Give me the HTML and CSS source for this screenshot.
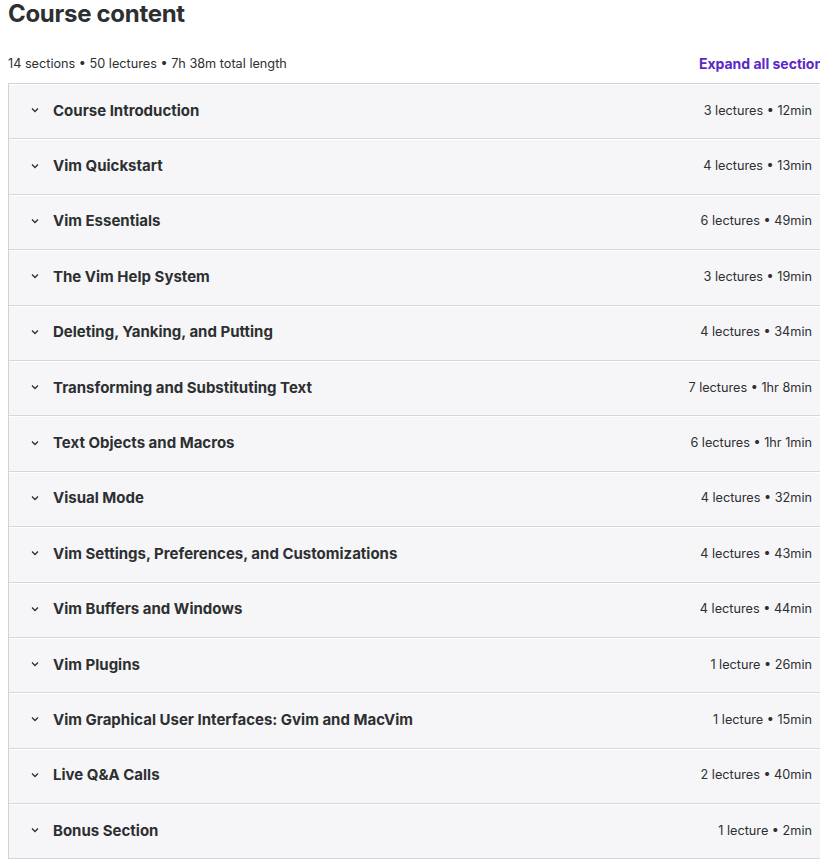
FILE: index.html
```html
<!DOCTYPE html>
<html lang="en">
<head>
    <meta charset="UTF-8">
    <meta name="viewport" content="width=device-width, initial-scale=1.0">
    <title>Course content</title>
    <link rel="stylesheet" href="styles.css">
</head>
<body>
    <main class="curriculum">
        <h2 class="curriculum-title">Course content</h2>

        <div class="curriculum-header">
            <span class="curriculum-stats">14 sections &bull; 50 lectures &bull; 7h 38m total length</span>
            <button class="expand-all">Expand all sections</button>
        </div>

        <div class="section-list">
            <div class="section-row">
                <span class="chevron"><svg viewBox="0 0 12 12"><path d="M3 4.5 6 7.5 9 4.5"/></svg></span>
                <span class="section-name">Course Introduction</span>
                <span class="section-meta">3 lectures &bull; 12min</span>
            </div>
            <div class="section-row">
                <span class="chevron"><svg viewBox="0 0 12 12"><path d="M3 4.5 6 7.5 9 4.5"/></svg></span>
                <span class="section-name">Vim Quickstart</span>
                <span class="section-meta">4 lectures &bull; 13min</span>
            </div>
            <div class="section-row">
                <span class="chevron"><svg viewBox="0 0 12 12"><path d="M3 4.5 6 7.5 9 4.5"/></svg></span>
                <span class="section-name">Vim Essentials</span>
                <span class="section-meta">6 lectures &bull; 49min</span>
            </div>
            <div class="section-row">
                <span class="chevron"><svg viewBox="0 0 12 12"><path d="M3 4.5 6 7.5 9 4.5"/></svg></span>
                <span class="section-name">The Vim Help System</span>
                <span class="section-meta">3 lectures &bull; 19min</span>
            </div>
            <div class="section-row">
                <span class="chevron"><svg viewBox="0 0 12 12"><path d="M3 4.5 6 7.5 9 4.5"/></svg></span>
                <span class="section-name">Deleting, Yanking, and Putting</span>
                <span class="section-meta">4 lectures &bull; 34min</span>
            </div>
            <div class="section-row">
                <span class="chevron"><svg viewBox="0 0 12 12"><path d="M3 4.5 6 7.5 9 4.5"/></svg></span>
                <span class="section-name">Transforming and Substituting Text</span>
                <span class="section-meta">7 lectures &bull; 1hr 8min</span>
            </div>
            <div class="section-row">
                <span class="chevron"><svg viewBox="0 0 12 12"><path d="M3 4.5 6 7.5 9 4.5"/></svg></span>
                <span class="section-name">Text Objects and Macros</span>
                <span class="section-meta">6 lectures &bull; 1hr 1min</span>
            </div>
            <div class="section-row">
                <span class="chevron"><svg viewBox="0 0 12 12"><path d="M3 4.5 6 7.5 9 4.5"/></svg></span>
                <span class="section-name">Visual Mode</span>
                <span class="section-meta">4 lectures &bull; 32min</span>
            </div>
            <div class="section-row">
                <span class="chevron"><svg viewBox="0 0 12 12"><path d="M3 4.5 6 7.5 9 4.5"/></svg></span>
                <span class="section-name">Vim Settings, Preferences, and Customizations</span>
                <span class="section-meta">4 lectures &bull; 43min</span>
            </div>
            <div class="section-row">
                <span class="chevron"><svg viewBox="0 0 12 12"><path d="M3 4.5 6 7.5 9 4.5"/></svg></span>
                <span class="section-name">Vim Buffers and Windows</span>
                <span class="section-meta">4 lectures &bull; 44min</span>
            </div>
            <div class="section-row">
                <span class="chevron"><svg viewBox="0 0 12 12"><path d="M3 4.5 6 7.5 9 4.5"/></svg></span>
                <span class="section-name">Vim Plugins</span>
                <span class="section-meta">1 lecture &bull; 26min</span>
            </div>
            <div class="section-row">
                <span class="chevron"><svg viewBox="0 0 12 12"><path d="M3 4.5 6 7.5 9 4.5"/></svg></span>
                <span class="section-name">Vim Graphical User Interfaces: Gvim and MacVim</span>
                <span class="section-meta">1 lecture &bull; 15min</span>
            </div>
            <div class="section-row">
                <span class="chevron"><svg viewBox="0 0 12 12"><path d="M3 4.5 6 7.5 9 4.5"/></svg></span>
                <span class="section-name">Live Q&amp;A Calls</span>
                <span class="section-meta">2 lectures &bull; 40min</span>
            </div>
            <div class="section-row">
                <span class="chevron"><svg viewBox="0 0 12 12"><path d="M3 4.5 6 7.5 9 4.5"/></svg></span>
                <span class="section-name">Bonus Section</span>
                <span class="section-meta">1 lecture &bull; 2min</span>
            </div>
        </div>
    </main>
</body>
</html>
```

FILE: styles.css
```css
body {
    font-family: 'Inter', 'Liberation Sans', sans-serif;
    background-color: #ffffff;
    color: #2d2f31;
    margin: 0;
    padding: 0 0 0 8px;
    overflow: hidden;
}

.curriculum {
    width: 828px;
}

.curriculum-title {
    font-size: 24px;
    font-weight: 700;
    letter-spacing: -0.3px;
    margin: 0;
    line-height: 28px;
    height: 46px;
}

.curriculum-header {
    display: flex;
    justify-content: space-between;
    align-items: center;
    height: 34px;
    margin-bottom: 3px;
}

.curriculum-stats {
    font-size: 12.7px;
    color: #2d2f31;
}

.expand-all {
    background: none;
    border: none;
    padding: 0;
    margin-right: 5px;
    font-family: inherit;
    font-size: 14px;
    font-weight: 700;
    color: #5a27c9;
    white-space: nowrap;
    cursor: pointer;
}

.section-list {
    border: 1px solid #d1d2d6;
    border-right: none;
}

.section-row {
    display: flex;
    align-items: center;
    padding: 0 24px 2px 20px;
    box-sizing: border-box;
    height: 55.4px;
    background-color: #f6f6f8;
    border-bottom: 1px solid #d6d7db;
    box-shadow: inset 0 1px 0 #ffffff;
}

.chevron {
    width: 12px;
    height: 12px;
    margin-right: 12px;
    display: flex;
}

.chevron svg {
    width: 12px;
    height: 12px;
    fill: none;
    stroke: #2d2f31;
    stroke-width: 1.3;
}

.section-name {
    flex: 1;
    font-size: 15px;
    font-weight: 700;
    color: #2d2f31;
}

.section-meta {
    font-size: 12.7px;
    color: #2d2f31;
}
```
